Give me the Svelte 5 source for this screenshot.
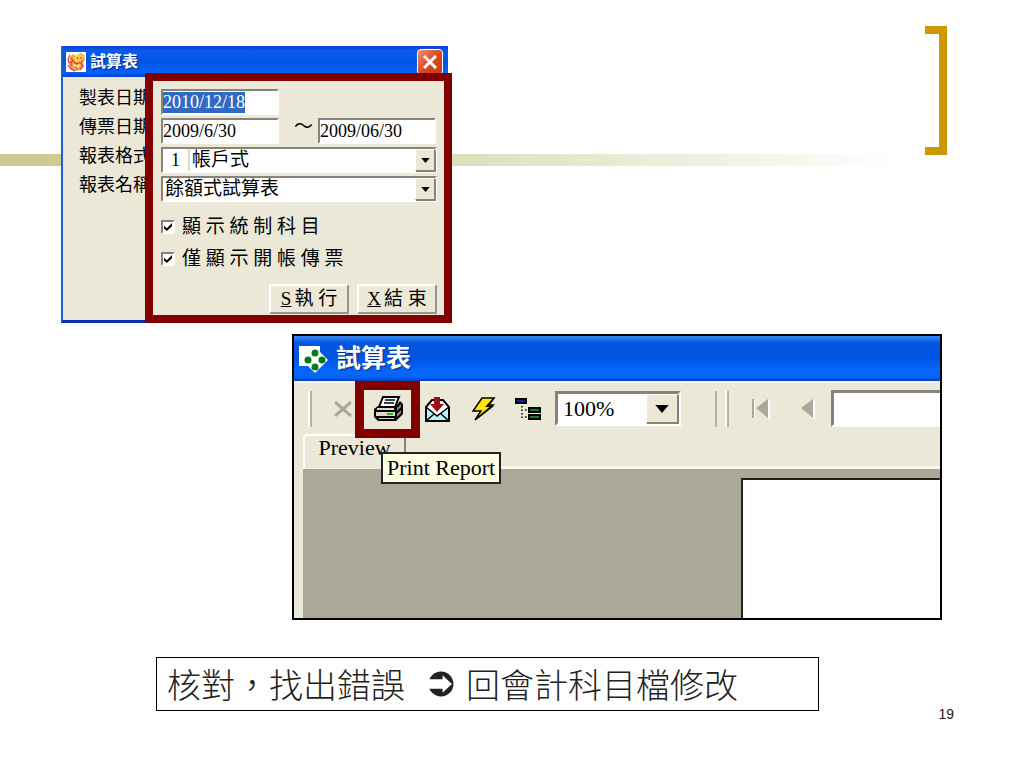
<script>
    import { onMount } from "svelte";

    let reportDate = $state("2010/12/18");
    let dateFrom = $state("2009/6/30");
    let dateTo = $state("2009/06/30");
    let formatNo = $state("1");
    let format = $state("帳戶式");
    let reportName = $state("餘額式試算表");
    let zoom = $state("100%");
    let page = $state("");
    let showControl = $state(true);
    let openingOnly = $state(true);

    let dateField;

    onMount(() => {
        dateField.focus();
        dateField.select();
    });
</script>

{#snippet arrow()}
    <span class="arrow" aria-hidden="true">
        <svg viewBox="0 0 10 6"><path d="M0 0h10L5 6z" /></svg>
    </span>
{/snippet}

<main class="slide">
    <div class="band"></div>
    <div class="bracket"></div>

    <section class="dialog">
        <header class="dialog-title">
            <svg class="app-icon" viewBox="0 0 20 20">
                <rect width="20" height="20" fill="#fff" />
                <path d="M4 5l3-3 3 2 4-3 4 2 1 5-2 2 1 4-3 4-5 1-5-2-2-4 1-4z" fill="#f3a05c" />
                <path d="M9 4l4-2 4 2v4l-4 3-3-1-2-3z" fill="#ffd93a" />
                <path d="M7 12l4 1 3-1-1 4-4 1z" fill="#ffe07a" />
                <path
                    d="M4 3l-2 4 1 4M5 6l2 3-3 2 2 3M2 13l3 4 4 2M17 8l-2 3 2 3-3 4M8 10l3 2 3-2M11 5l1 2M15 5v2M9 15l3 2"
                    fill="none"
                    stroke="#d3363c"
                    stroke-width="1.2"
                />
            </svg>
            <h1>試算表</h1>
            <button class="close" aria-label="關閉">
                <svg viewBox="0 0 14 14"><path d="M1 1l12 12M13 1L1 13" /></svg>
            </button>
        </header>

        <div class="dialog-body">
            <div class="row">
                <label for="report-date">製表日期</label>
                <input id="report-date" class="box date" bind:this={dateField} bind:value={reportDate} />
            </div>
            <div class="row">
                <label for="date-from">傳票日期</label>
                <input id="date-from" class="box date" bind:value={dateFrom} />
                <span class="tilde">～</span>
                <input class="box date" aria-label="傳票日期迄" bind:value={dateTo} />
            </div>
            <div class="row">
                <label for="format">報表格式</label>
                <div class="box combo">
                    <input class="code" aria-label="格式代號" bind:value={formatNo} />
                    <select id="format" bind:value={format}>
                        <option>帳戶式</option>
                    </select>
                    {@render arrow()}
                </div>
            </div>
            <div class="row">
                <label for="report-name">報表名稱</label>
                <div class="box combo">
                    <select id="report-name" bind:value={reportName}>
                        <option>餘額式試算表</option>
                    </select>
                    {@render arrow()}
                </div>
            </div>

            <div class="checks">
                <label><input type="checkbox" bind:checked={showControl} />顯 示 統 制 科 目</label>
                <label><input type="checkbox" bind:checked={openingOnly} />僅 顯 示 開 帳 傳 票</label>
            </div>

            <div class="actions">
                <button><u>S</u>執 行</button>
                <button><u>X</u>結 束</button>
            </div>
        </div>
        <div class="mark mark-form"></div>
    </section>

    <section class="preview">
        <header class="preview-title">
            <svg class="clover" viewBox="0 0 30 28">
                <path d="M1 1h21v20H1z" fill="#fff" />
                <path d="M17 2l13 13-13 13L4 15z" fill="#fff" />
                <g fill="#0b7a16">
                    <circle cx="17" cy="8" r="3.5" />
                    <circle cx="10" cy="15" r="3.5" />
                    <circle cx="24" cy="15" r="3.5" />
                    <circle cx="17" cy="22" r="3.5" />
                </g>
            </svg>
            <h2>試算表</h2>
        </header>

        <div class="preview-body">
            <div class="toolbar">
                <span class="grip"></span>
                <button class="tool stop" aria-label="Stop">
                    <svg viewBox="0 0 18 16"><path d="M1 1l16 14M17 1L1 15" fill="none" stroke="#aaa897" stroke-width="3" /></svg>
                </button>
                <div class="print">
                    <button class="tool" aria-label="Print Report">
                        <svg viewBox="0 0 30 26">
                            <path d="M9 1h16l-4 10H5z" fill="#fff" stroke="#000" stroke-width="2" />
                            <path d="M11 4h10M10 7h10" stroke="#000" stroke-width="1.5" />
                            <path d="M4 10h18l4-5 3 3v10l-7 7H4l-4-4v-8z" fill="#000" />
                            <path d="M3 12h17v2H3zM2 16h19v4H2z" fill="#dcd9c8" />
                            <path d="M23 12l4-4v3l-4 4zM23 18l4-4v3l-4 4z" fill="#8f8d80" />
                            <path d="M13 17h6v2h-6z" fill="#16b52b" />
                            <path d="M5 22h15v1H5z" fill="#dcd9c8" />
                        </svg>
                    </button>
                    <div class="mark mark-print"></div>
                    <div class="tooltip" role="tooltip">Print Report</div>
                </div>
                <button class="tool mail" aria-label="Export Report">
                    <svg viewBox="0 0 27 26">
                        <path d="M2 11L8 4h11l6 7v14H2z" fill="#fff" stroke="#000" stroke-width="2" />
                        <path d="M3 12l10 8 11-8v12H3z" fill="#b9f4f6" />
                        <path d="M2 11l11 9 12-9M2 25l8-7M25 25l-8-7" fill="none" stroke="#000" stroke-width="1.5" />
                        <path d="M10 1h6v7h4l-7 8-7-8h4z" fill="#a30d16" />
                    </svg>
                </button>
                <button class="tool bolt" aria-label="Refresh">
                    <svg viewBox="0 0 26 26">
                        <path d="M12 2h12l-6 7h5L5 24l6-9H3z" fill="#ffe600" stroke="#000" stroke-width="1.5" />
                        <path d="M25 2l-6 8h5L5 25l15-14h-5z" />
                    </svg>
                </button>
                <button class="tool tree" aria-label="Toggle Group Tree">
                    <svg viewBox="0 0 26 22">
                        <path d="M0 0h12v6H0z" />
                        <path d="M2 2h8v2H2z" fill="#1717c4" />
                        <path d="M7 8v13M10 12h4M10 19h4" stroke="#000" stroke-width="1.5" stroke-dasharray="1.5 2" />
                        <path d="M13 9h13v6H13zM13 16h13v6H13z" />
                        <path d="M15 11h9v2h-9zM15 18h9v2h-9z" fill="#187c22" />
                    </svg>
                </button>
                <div class="box combo zoom">
                    <select aria-label="Zoom" bind:value={zoom}>
                        <option>100%</option>
                    </select>
                    {@render arrow()}
                </div>
                <span class="grip second"></span>
                <button class="tool first" aria-label="First page">
                    <svg viewBox="0 0 18 20">
                        <path d="M2 1v19M17 1v19" stroke="#fff" stroke-width="2" />
                        <path d="M0 0h2v19H0zM16 0v19L4 9z" fill="#aaa897" />
                    </svg>
                </button>
                <button class="tool prev" aria-label="Previous page">
                    <svg viewBox="0 0 14 20">
                        <path d="M13 1v19" stroke="#fff" stroke-width="2" />
                        <path d="M12 0v19L0 9z" fill="#aaa897" />
                    </svg>
                </button>
                <input class="box page-no" aria-label="Page" bind:value={page} />
            </div>
            <div class="tabs">
                <button class="tab">Preview</button>
            </div>
            <div class="canvas">
                <div class="paper"></div>
            </div>
        </div>
    </section>

    <footer>
        <p class="caption">
            <span>核對，找出錯誤</span>
            <svg viewBox="0 0 25 25">
                <circle cx="12.5" cy="12.5" r="12" fill="#222" />
                <path d="M0 8h14V4l9 8.500-9 8.500v-4H0z" fill="#fff" />
            </svg>
            <span>回會計科目檔修改</span>
        </p>
        <span class="number">19</span>
    </footer>
</main>

<style>
    :global(body) {
        margin: 0;
        background: #fff;
    }
    .slide {
        position: relative;
        box-sizing: border-box;
        min-height: 100vh;
        padding-top: 46px;
        overflow: hidden;
        background: #fff;
        color: #000;
        font-family: "Liberation Serif", "Noto Sans CJK TC", serif;
    }
    .slide * {
        box-sizing: border-box;
    }
    .band {
        position: absolute;
        top: 154px;
        left: 0;
        right: 0;
        height: 12px;
        background: linear-gradient(90deg, #cac98d, #dedebb 44%, #fff 88%);
    }
    .bracket {
        position: absolute;
        top: 26px;
        right: 77px;
        width: 22px;
        height: 129px;
        border: 8px solid #cc9900;
        border-left: 0;
    }
    h1,
    h2 {
        margin: 0;
        color: #fff;
        font-weight: 700;
        text-shadow: 1px 1px 1px #062a80;
    }
    button,
    input,
    select {
        margin: 0;
        color: inherit;
        font-family: inherit;
    }
    svg {
        display: block;
    }

    /* dialog */
    .dialog {
        position: relative;
        width: 387px;
        margin-left: 61px;
        background: #ebe8d8;
        border-left: 2px solid #1c5fd8;
        border-bottom: 3px solid #0a2fb0;
    }
    .dialog-title {
        display: flex;
        align-items: center;
        height: 31px;
        padding: 0 5px 0 3px;
        background: linear-gradient(#0a3fc4, #0a5cee 15%, #0054e3 50%, #0662fb 85%, #0340cc);
    }
    .app-icon {
        width: 20px;
        height: 20px;
    }
    h1 {
        flex: 1;
        margin-left: 4px;
        font-size: 16px;
        line-height: 24px;
    }
    .close {
        display: flex;
        align-items: center;
        justify-content: center;
        width: 26px;
        height: 26px;
        padding: 0;
        border: 1px solid #fff;
        border-radius: 4px;
        background: linear-gradient(135deg, #ee9070, #dc4a24 50%, #c33a14);
    }
    .close svg {
        width: 14px;
        height: 14px;
        fill: none;
        stroke: #fff;
        stroke-width: 3;
    }
    .dialog-body {
        padding: 12px 11px 6px 16px;
        font-size: 19px;
    }
    .row {
        display: flex;
        height: 26px;
        margin-bottom: 3px;
    }
    .row label {
        flex: none;
        width: 74px;
        margin-right: 8px;
        font-size: 18px;
        white-space: nowrap;
        line-height: 18px;
    }
    .box {
        border: 2px solid;
        border-color: #86847a #fff #fff #86847a;
        border-radius: 0;
        background: #fff;
        outline: none;
    }
    .date {
        width: 118px;
        padding: 0;
        font-size: 18px;
    }
    .date::selection {
        background: #316ac5;
        color: #fff;
    }
    .tilde {
        width: 39px;
        padding-left: 15px;
        line-height: 18px;
    }
    .combo {
        display: flex;
        flex: 1;
        min-width: 0;
    }
    .combo select {
        flex: 1;
        min-width: 0;
        padding: 0 0 0 2px;
        border: 0;
        outline: none;
        appearance: none;
        background: #fff;
        font-size: 19px;
        line-height: 22px;
    }
    .code {
        width: 27px;
        padding: 0;
        border: 0;
        border-right: 2px solid #dcd9ca;
        outline: none;
        font-size: 18px;
        text-align: center;
    }
    .arrow {
        display: flex;
        align-items: center;
        justify-content: center;
        width: 20px;
        border: 1px solid;
        border-color: #fff #86847a #86847a #fff;
        background: #ebe8d8;
        box-shadow: 1px 1px 0 #86847a;
    }
    .arrow svg {
        width: 9px;
        height: 5px;
    }
    .checks label {
        display: flex;
        align-items: center;
        gap: 7px;
        height: 32px;
        line-height: 32px;
    }
    .checks {
        padding: 6px 0 0 82px;
    }
    .checks input {
        display: grid;
        place-items: center;
        width: 14px;
        height: 14px;
        appearance: none;
        border: 2px solid;
        border-color: #86847a #fff #fff #86847a;
        background: #fff;
    }
    .checks input:checked::before {
        content: "";
        width: 8px;
        height: 8px;
        background: #000;
        clip-path: polygon(0 35%, 35% 65%, 100% 0, 100% 40%, 35% 100%, 0 70%);
    }
    .actions {
        display: flex;
        justify-content: flex-end;
        gap: 8px;
        margin-top: 9px;
    }
    .actions button {
        width: 80px;
        height: 30px;
        padding: 0;
        border: 2px solid;
        border-color: #fff #96948a #96948a #fff;
        background: #ebe8d8;
        font-size: 19px;
        line-height: 24px;
    }
    .actions u {
        margin-right: 3px;
    }
    .mark {
        position: absolute;
        pointer-events: none;
        border: 8px solid #800000;
    }
    .mark-form {
        top: 27px;
        right: -4px;
        bottom: -3px;
        left: 82px;
    }

    /* report preview */
    .preview {
        margin: 11px 82px 0 292px;
        border: 2px solid #000;
        background: #ebe8d8;
        overflow: hidden;
    }
    .preview-title {
        display: flex;
        align-items: center;
        height: 45px;
        padding-left: 4px;
        background: linear-gradient(#3a8cf6, #0556e0 15%, #0054e3 50%, #0668ff 80%, #0560f4 92%, #0440b8);
    }
    .clover {
        width: 30px;
        height: 28px;
    }
    h2 {
        margin-left: 8px;
        font-size: 25px;
        line-height: 36px;
    }
    .preview-body {
        padding-left: 9px;
        border-top: 2px solid #f6f4ea;
    }
    .toolbar {
        display: flex;
        align-items: center;
        height: 51px;
    }
    .grip {
        flex: none;
        width: 9px;
        height: 36px;
        border-right: 2px solid #b5b2a3;
        box-shadow: inset -2px 0 0 #fff;
    }
    .tool {
        flex: none;
        padding: 0;
        border: 0;
        background: none;
    }
    .stop {
        margin-left: 22px;
    }
    .stop svg {
        width: 18px;
        height: 16px;
    }
    .print {
        position: relative;
        flex: none;
        margin-left: 11px;
    }
    .print .tool {
        display: block;
        padding: 0 9px 0 11px;
    }
    .print svg {
        width: 30px;
        height: 26px;
    }
    .mark-print {
        top: -15px;
        left: -8px;
        width: 65px;
        height: 57px;
        border-width: 9px;
    }
    .tooltip {
        position: absolute;
        z-index: 1;
        top: 56px;
        left: 18px;
        padding: 0 4px;
        border: 2px solid #222;
        background: #ffffe1;
        font-size: 22px;
        line-height: 28px;
        white-space: nowrap;
    }
    .mail {
        margin-left: 11px;
    }
    .mail svg {
        width: 27px;
        height: 26px;
    }
    .bolt {
        margin-left: 19px;
    }
    .bolt svg {
        width: 26px;
        height: 26px;
    }
    .tree {
        margin-left: 19px;
    }
    .tree svg {
        width: 26px;
        height: 22px;
    }
    .zoom {
        flex: none;
        width: 126px;
        height: 35px;
        margin-left: 14px;
        border-width: 3px;
    }
    .zoom select {
        padding-left: 5px;
        font-size: 22px;
        line-height: 28px;
    }
    .zoom .arrow {
        width: 32px;
    }
    .zoom .arrow svg {
        width: 14px;
        height: 8px;
    }
    .second {
        width: 14px;
        margin-left: 34px;
        border-left: 2px solid #b5b2a3;
    }
    .first {
        margin-left: 23px;
    }
    .first svg {
        width: 18px;
        height: 20px;
    }
    .prev {
        margin-left: 31px;
    }
    .prev svg {
        width: 14px;
        height: 20px;
    }
    .page-no {
        flex: 1;
        min-width: 0;
        height: 37px;
        margin-left: 16px;
        padding: 0 4px;
        border-width: 3px;
        border-right: 0;
        font-size: 22px;
    }
    .tabs {
        display: flex;
        height: 35px;
        border-bottom: 3px solid #fbf9f0;
    }
    .tab {
        width: 103px;
        height: 35px;
        margin-bottom: -3px;
        padding: 0 0 8px;
        border: 2px solid;
        border-color: #fff #86847a transparent #fff;
        border-radius: 4px 4px 0 0;
        background: #ebe8d8;
        font-size: 22px;
        line-height: 24px;
    }
    .canvas {
        padding-top: 9px;
        background: #aaa897;
    }
    .paper {
        height: 140px;
        margin-left: 438px;
        border-top: 2px solid #222;
        border-left: 2px solid #222;
        background: #fff;
    }

    footer {
        display: flex;
        align-items: flex-start;
        margin: 37px 70px 0 156px;
    }
    .caption {
        display: flex;
        flex: 1;
        align-items: center;
        margin: 0 119px 0 0;
        padding: 0 10px;
        border: 1px solid #000;
        color: #222;
        font-family: "Noto Sans CJK TC", sans-serif;
        font-size: 34px;
        font-weight: 300;
        line-height: 52px;
        white-space: nowrap;
    }
    .caption svg {
        width: 26px;
        height: 26px;
        margin: 0 12px 0 23px;
    }
    .number {
        margin-top: 49px;
        color: #222;
        font-family: "Liberation Sans", sans-serif;
        font-size: 14px;
        line-height: 16px;
    }
</style>
